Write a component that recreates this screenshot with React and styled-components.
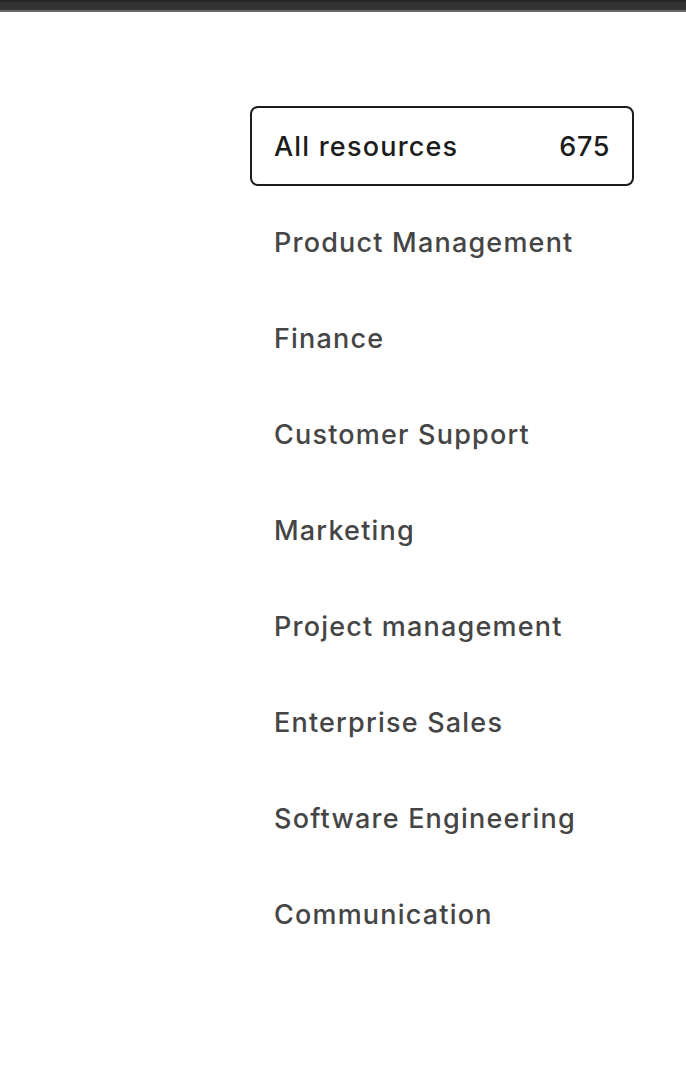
import React from 'react';
import styled, { createGlobalStyle } from 'styled-components';

const Global = createGlobalStyle`
  html, body { margin: 0; padding: 0; background: #fff; }
  body { font-family: Inter, "Noto Sans", sans-serif; }
`;

const TopBar = styled.div`
  height: 12px;
  background: #333;
  border-top: 2px solid #26252a;
  border-bottom: 2px solid #666;
  box-sizing: border-box;
`;

const Page = styled.div`
  display: flex;
  justify-content: flex-end;
  padding: 94px 52px 0 0;
`;

const List = styled.ul`
  list-style: none;
  margin: 0;
  padding: 0;
  width: 384px;
  display: flex;
  flex-direction: column;
  gap: 16px;
`;

const Item = styled.li`
  height: 80px;
  box-sizing: border-box;
  display: flex;
  align-items: center;
  justify-content: space-between;
  padding: 0 22px 0 22px;
  border: 2px solid ${p => (p.$active ? '#1c1c1c' : 'transparent')};
  border-radius: 8px;
  font-size: 27px;
  font-weight: 500;
  color: ${p => (p.$active ? '#1c1c1c' : '#454545')};
  letter-spacing: 1.2px;
`;

const Count = styled.span`
  font-weight: 500;
  letter-spacing: 0.6px;
`;

const items = [
  'Product Management',
  'Finance',
  'Customer Support',
  'Marketing',
  'Project management',
  'Enterprise Sales',
  'Software Engineering',
  'Communication',
];

export default function App() {
  return (
    <>
      <Global />
      <TopBar />
      <Page>
        <List>
          <Item $active>
            <span>All resources</span>
            <Count>675</Count>
          </Item>
          {items.map(name => (
            <Item key={name}>{name}</Item>
          ))}
        </List>
      </Page>
    </>
  );
}
